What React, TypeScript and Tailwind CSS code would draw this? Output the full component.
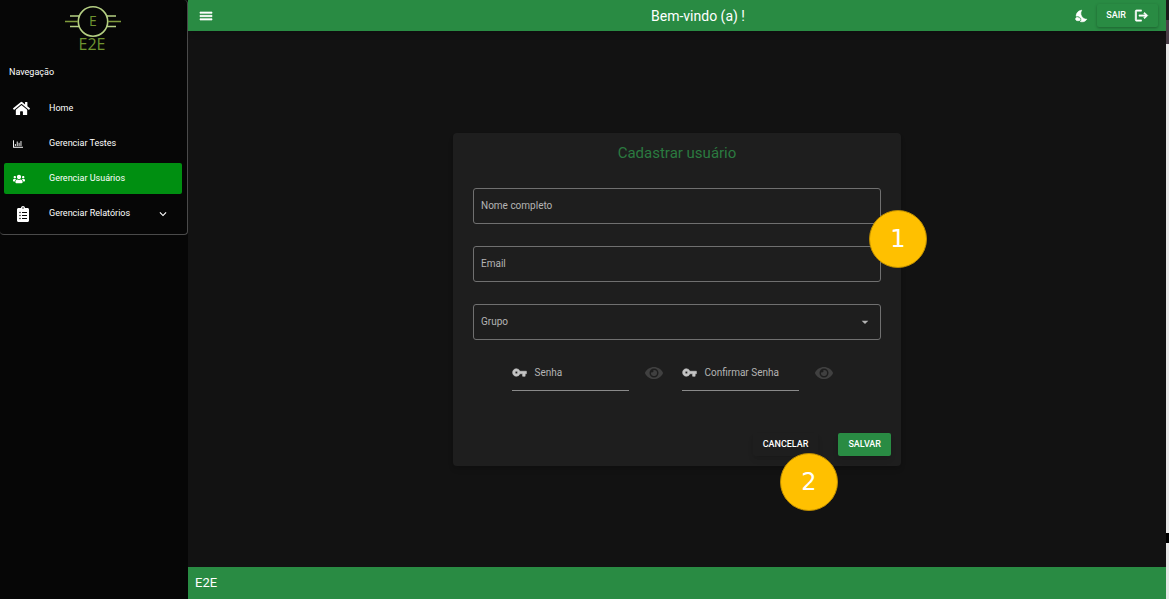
import type { ReactNode } from "react";
import { FaHome, FaUsers, FaClipboardList, FaEye, FaRegChartBar } from "react-icons/fa";
import {
  MdArrowDropDown,
  MdExpandMore,
  MdLogout,
  MdMenu,
  MdNightsStay,
  MdVpnKey,
} from "react-icons/md";

function Logo() {
  return (
    <svg viewBox="0 0 58 52" className="h-[52px] w-[58px]" fill="none" aria-label="E2E" role="img">
      <g stroke="#b5cf83" strokeWidth="1.6">
        <circle cx="29" cy="17.5" r="14.7" />
        <path d="M6 12H15.5M6 22.5H15.5M42.5 12H52M42.5 22.5H52" />
      </g>
      <path d="M1 17.5H14M44 17.5H57" stroke="#7f9a3c" strokeWidth="1.5" />
      <text x="29" y="22" textAnchor="middle" fontSize="14" fill="#6f9330" fontFamily="Open Sans, sans-serif">E</text>
      <text x="28" y="46" textAnchor="middle" fontSize="16" fill="#6f9330" fontFamily="Open Sans, sans-serif">E2E</text>
    </svg>
  );
}

function NavItem({ icon, label, active, trailing }: { icon: ReactNode; label: string; active?: boolean; trailing?: ReactNode }) {
  return (
    <li>
      <a
        href="#"
        aria-current={active ? "page" : undefined}
        className={`flex h-[31px] items-center rounded-xs pl-[9px] pr-3 text-[9px] ${active ? "bg-[#008f11]" : ""}`}
      >
        <span className="flex w-9 items-center">{icon}</span>
        <span className="flex-1">{label}</span>
        {trailing}
      </a>
    </li>
  );
}

function Sidebar() {
  return (
    <aside className="w-[188px] shrink-0 bg-[#060606]">
      <div className="rounded-sm border-r border-b border-[#4a4a4a] pt-1 pb-[5px]">
        <div className="flex justify-center pr-0.5">
          <Logo />
        </div>
        <h2 className="mt-2 px-[9px] text-[9px] leading-4">Navegação</h2>
        <nav className="mt-[13px] pl-1 pr-[5px]">
          <ul className="flex flex-col gap-1">
            <NavItem icon={<FaHome size={17} />} label="Home" />
            <NavItem icon={<FaRegChartBar size={10} />} label="Gerenciar Testes" />
            <NavItem icon={<FaUsers size={12} />} label="Gerenciar Usuários" active />
            <NavItem
              icon={<FaClipboardList size={16} className="mx-0.5" />}
              label="Gerenciar Relatórios"
              trailing={<MdExpandMore size={14} />}
            />
          </ul>
        </nav>
      </div>
    </aside>
  );
}

function TextField({ id, label, type }: { id: string; label: string; type: string }) {
  return (
    <div className="flex h-9 items-center gap-2 rounded-[3px] border border-[#707070] px-[7px]">
      <label htmlFor={id}>{label}</label>
      <input id={id} type={type} className="min-w-0 flex-1 bg-transparent outline-none" />
    </div>
  );
}

function PasswordField({ id, label }: { id: string; label: string }) {
  return (
    <div className="flex items-center">
      <div className="flex h-9 w-[117px] items-center border-b border-[#8a8a8a]">
        <MdVpnKey size={15} strokeWidth={1} className="mr-2 shrink-0 text-[#c4c4c4] [&>path:first-child]:stroke-none" />
        <label htmlFor={id} className="whitespace-nowrap">{label}</label>
        <input id={id} type="password" className="w-0 min-w-0 flex-1 bg-transparent outline-none" />
      </div>
      <button type="button" aria-label="Mostrar senha" className="ml-4 text-[#404040]">
        <FaEye size={18} />
      </button>
    </div>
  );
}

function Step({ children, className }: { children: ReactNode; className: string }) {
  return (
    <span
      className={`absolute flex size-[58px] items-center justify-center rounded-full border border-[#bc8c00] bg-[#ffc000] font-['DejaVu_Sans',sans-serif] text-2xl text-white ${className}`}
    >
      {children}
    </span>
  );
}

function UserForm() {
  return (
    <form className="relative w-[448px] rounded-sm bg-[#1e1e1e] pt-2 pr-[10px] pb-[10px] pl-5 text-[10px] text-[#b4b4b4] shadow-md">
      <div className="pr-[10px]">
        <h1 className="text-center text-[15px] leading-6 text-[#2b7a40]">Cadastrar usuário</h1>
        <div className="mt-[23px] flex flex-col gap-[22px]">
          <TextField id="nome" label="Nome completo" type="text" />
          <TextField id="email" label="Email" type="email" />
          <div className="flex h-9 items-center rounded-[3px] border border-[#707070] px-[7px]">
            <label htmlFor="grupo">Grupo</label>
            <select id="grupo" defaultValue="" className="flex-1 appearance-none bg-transparent outline-none">
              <option value=""></option>
            </select>
            <MdArrowDropDown size={16} />
          </div>
        </div>
        <div className="mt-[15px] flex justify-center gap-[19px] pr-[10px]">
          <PasswordField id="senha" label="Senha" />
          <PasswordField id="confirmar" label="Confirmar Senha" />
        </div>
      </div>
      <div className="mt-[42px] flex justify-end gap-5 text-[9px] font-medium text-white">
        <button type="button" className="h-[23px] rounded-xs px-[10px] pt-0.5 shadow-md">CANCELAR</button>
        <button type="submit" className="h-[23px] rounded-xs bg-[#298b43] px-[10px] pt-0.5 shadow-md">SALVAR</button>
      </div>
      <Step className="top-[77px] left-[416px]">1</Step>
      <Step className="top-[320px] left-[327px]">2</Step>
    </form>
  );
}

export default function App() {
  return (
    <div className="flex min-h-screen bg-[#121212] font-['Roboto',sans-serif] text-white">
      <Sidebar />
      <div className="flex min-w-0 flex-1 flex-col">
        <header className="flex h-[31px] items-center bg-[#298b43] pr-2 pl-[10px] shadow-md">
          <div className="flex flex-1">
            <button type="button" aria-label="Menu">
              <MdMenu size={16} strokeWidth={1} className="[&>path:first-child]:stroke-none" />
            </button>
          </div>
          <p className="pl-10 text-sm">Bem-vindo (a) !</p>
          <div className="flex flex-1 items-center justify-end gap-2">
            <button type="button" aria-label="Modo escuro">
              <MdNightsStay size={14} strokeWidth={1} className="[&>path:first-child]:stroke-none" />
            </button>
            <button
              type="button"
              className="flex h-[23px] items-center gap-2 rounded-xs px-[9px] text-[9px] font-medium shadow-[0_1px_3px_rgba(0,0,0,0.3)]"
            >
              SAIR
              <MdLogout size={15} strokeWidth={1} className="[&>path:first-child]:stroke-none" />
            </button>
          </div>
        </header>
        <main className="flex flex-1 items-center justify-center">
          <UserForm />
        </main>
        <footer className="flex h-8 items-center bg-[#298b43] px-[7px] text-[13px]">E2E</footer>
      </div>
      <div className="flex w-[3px] shrink-0 flex-col bg-[#e8e8e8]">
        <div className="h-5 bg-[#1b1b1b]" />
        <div className="h-6 bg-[#4a3f48]" />
        <div className="flex-1" />
        <div className="h-[10px] bg-black" />
        <div className="h-14" />
      </div>
    </div>
  );
}
